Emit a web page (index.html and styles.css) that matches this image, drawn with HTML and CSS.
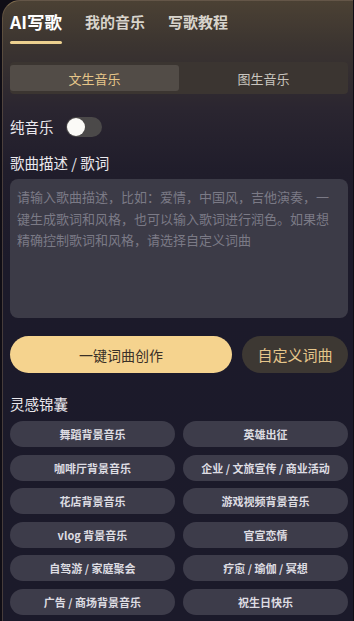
FILE: index.html
```html
<!DOCTYPE html>
<html lang="zh">
<head>
<meta charset="utf-8">
<link rel="stylesheet" href="styles.css">
</head>
<body>
<div class="app">
  <nav class="tabs">
    <div class="tab active">AI写歌<span class="underline"></span></div>
    <div class="tab">我的音乐</div>
    <div class="tab">写歌教程</div>
  </nav>

  <div class="segment">
    <div class="seg active">文生音乐</div>
    <div class="seg">图生音乐</div>
  </div>

  <div class="row-toggle">
    <span class="label">纯音乐</span>
    <span class="toggle"><span class="knob"></span></span>
  </div>

  <div class="label desc-label">歌曲描述 / 歌词</div>
  <div class="textarea">请输入歌曲描述，比如：爱情，中国风，吉他演奏，一键生成歌词和风格，也可以输入歌词进行润色。如果想精确控制歌词和风格，请选择自定义词曲</div>

  <div class="actions">
    <div class="btn primary">一键词曲创作</div>
    <div class="btn secondary">自定义词曲</div>
  </div>

  <div class="label idea-label">灵感锦囊</div>
  <div class="chips">
    <div class="chip">舞蹈背景音乐</div>
    <div class="chip">英雄出征</div>
    <div class="chip">咖啡厅背景音乐</div>
    <div class="chip">企业 / 文旅宣传 / 商业活动</div>
    <div class="chip">花店背景音乐</div>
    <div class="chip">游戏视频背景音乐</div>
    <div class="chip">vlog 背景音乐</div>
    <div class="chip">官宣恋情</div>
    <div class="chip">自驾游 / 家庭聚会</div>
    <div class="chip">疗愈 / 瑜伽 / 冥想</div>
    <div class="chip">广告 / 商场背景音乐</div>
    <div class="chip">祝生日快乐</div>
  </div>
</div>
</body>
</html>
```

FILE: styles.css
```css
* { box-sizing: border-box; }
html, body { margin: 0; padding: 0; }
body {
  width: 354px;
  height: 621px;
  overflow: hidden;
  background: #0f0d15;
  font-family: "Noto Sans CJK SC", "Noto Sans", sans-serif;
  color: #e6e4e8;
}
.app {
  margin-left: 2px;
  margin-right: 1px;
  height: 621px;
  padding: 10px 5px 0 7px;
  border-top-left-radius: 18px;
  border-top: 1px solid rgba(190, 160, 110, 0.45);
  border-left: 1px solid rgba(150, 125, 90, 0.35);
  background: linear-gradient(180deg, #4b4134 0%, #3b3430 45px, #2a2530 110px, #201d2b 170px, #1c1a2a 260px, #1b1a2a 100%);
  display: flex;
  flex-direction: column;
}
.tabs {
  display: flex;
  align-items: flex-start;
  gap: 23px;
  height: 34px;
  margin-top: -1px;
}
.tab {
  font-size: 15px;
  line-height: 24px;
  font-weight: 700;
  color: #d8d4cc;
  position: relative;
}
.tab.active {
  font-size: 17.5px;
  color: #ffffff;
}
.underline {
  position: absolute;
  left: 0;
  right: 0;
  top: 31px;
  height: 3px;
  border-radius: 2px;
  background: #ecd08f;
}
.segment {
  margin-top: 18px;
  height: 32px;
  padding: 3px 0;
  border-radius: 4px;
  background: #3b3531;
  display: flex;
}
.seg {
  flex: 1;
  display: flex;
  align-items: center;
  justify-content: center;
  font-size: 13px;
  color: #c9c5bf;
  border-radius: 3px;
}
.seg.active {
  background: #524c47;
  color: #e6c68a;
}
.row-toggle {
  margin-top: 23px;
  height: 20px;
  display: flex;
  align-items: center;
  gap: 12px;
}
.label {
  font-size: 14.5px;
  line-height: 20px;
  color: #ebe9ee;
}
.toggle {
  width: 36px;
  height: 20px;
  border-radius: 10px;
  background: #4b4949;
  padding: 1px;
  display: flex;
}
.knob {
  width: 18px;
  height: 18px;
  border-radius: 50%;
  background: #fbfaf7;
}
.desc-label { margin-top: 16px; }
.textarea {
  margin-top: 6px;
  height: 139px;
  border-radius: 8px;
  background: #3c3b47;
  padding: 7px 7px;
  font-size: 13px;
  line-height: 21.5px;
  color: #7b7a86;
}
.actions {
  margin-top: 18px;
  display: flex;
  gap: 10px;
  height: 37px;
}
.btn {
  border-radius: 19px;
  display: flex;
  align-items: center;
  justify-content: center;
}
.primary {
  width: 222px;
  background: #f5d38e;
  color: #3a3027;
  font-size: 14px;
}
.secondary {
  flex: 1;
  background: #3d3833;
  color: #e5c68b;
  font-size: 15px;
}
.idea-label { margin-top: 21px; }
.chips {
  margin-top: 7px;
  display: grid;
  grid-template-columns: 1fr 1fr;
  column-gap: 8px;
  row-gap: 7.5px;
}
.chip {
  height: 26px;
  border-radius: 13px;
  background: #3d3c4a;
  display: flex;
  align-items: center;
  justify-content: center;
  font-size: 11px;
  font-weight: 700;
  color: #dddce2;
  white-space: nowrap;
}
```
